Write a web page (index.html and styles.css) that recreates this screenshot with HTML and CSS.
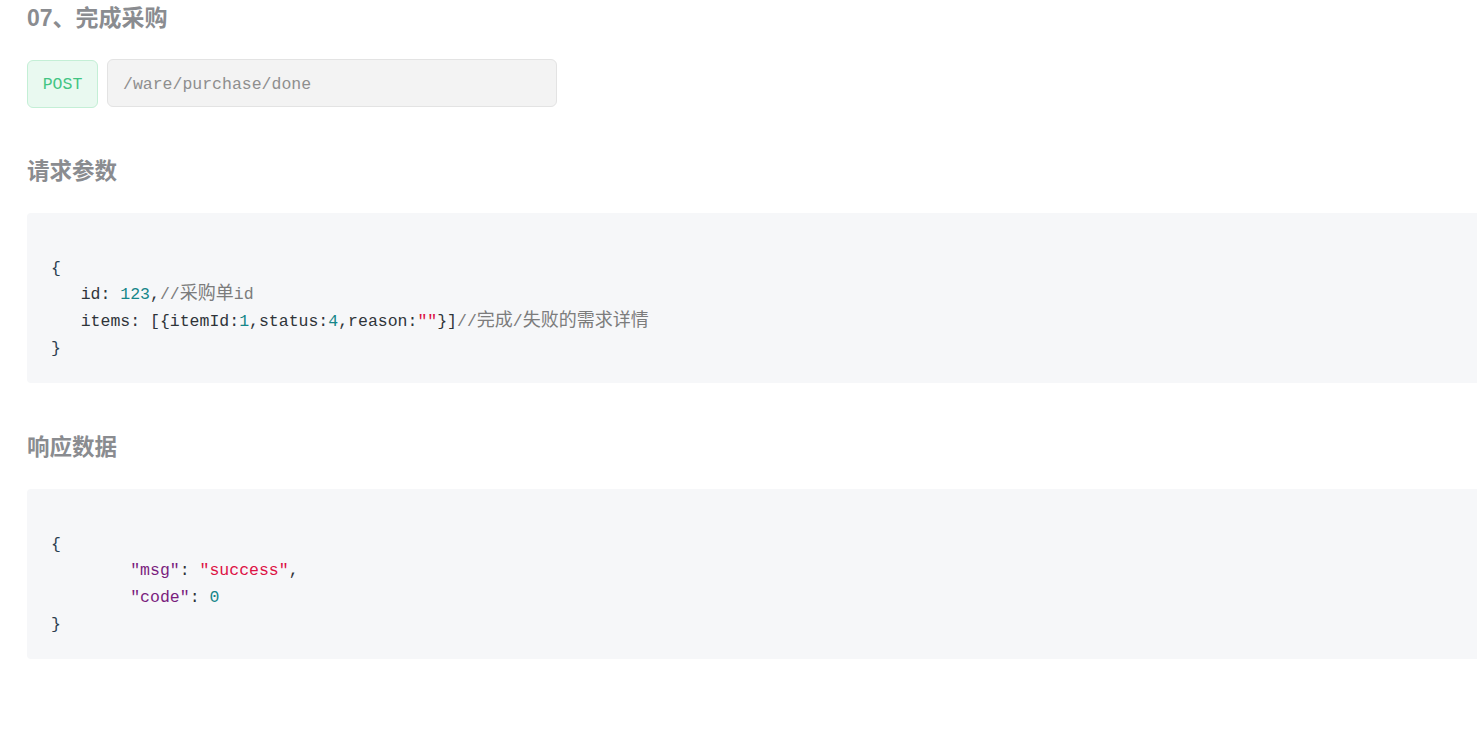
FILE: index.html
```
<!DOCTYPE html>
<html lang="zh-CN">
<head>
  <meta charset="UTF-8" />
  <title>07、完成采购</title>
  <link rel="stylesheet" href="styles.css">
</head>
<body>

<h1 class="api-title">07、完成采购</h1>

<div class="api-url">
  <span class="method">POST</span>
  <span class="path">/ware/purchase/done</span>
</div>

<h2 class="section">请求参数</h2>
<pre class="code">

<span class="p">{</span>
   id: <span class="num">123</span>,<span class="cmt">//<span class="cjk">采购单</span>id</span>
   items: [{itemId:<span class="num">1</span>,status:<span class="num">4</span>,reason:<span class="str">""</span>}]<span class="cmt">//<span class="cjk">完成</span>/<span class="cjk">失败的需求详情</span></span>
<span class="p">}</span></pre>

<h2 class="section">响应数据</h2>
<pre class="code">

<span class="p">{</span>
        <span class="key">"msg"</span>: <span class="str">"success"</span>,
        <span class="key">"code"</span>: <span class="num">0</span>
<span class="p">}</span></pre>

</body>
</html>
```

FILE: styles.css
```
body {
  margin: 0;
  padding: 0 0 0 27px;
  overflow-x: hidden;
  background: #fff;
  font-family: "Liberation Sans", "Noto Sans CJK SC", sans-serif;
  color: #333;
}
.api-title {
  margin: 0;
  height: 36px;
  line-height: 36px;
  font-size: 23px;
  font-weight: bold;
  color: #8a8c90;
}
.api-url {
  display: flex;
  align-items: flex-start;
  gap: 9px;
  margin-top: 23px;
  font-family: "Liberation Mono", monospace;
  font-size: 16.5px;
}
.method {
  box-sizing: border-box;
  width: 71px;
  height: 48px;
  margin-top: 1px;
  line-height: 48px;
  text-align: center;
  color: #42c583;
  background-color: #e9f9f0;
  border: 1px solid #c4efd6;
  border-radius: 6px;
}
.path {
  box-sizing: border-box;
  width: 450px;
  height: 48px;
  line-height: 50px;
  padding: 0 15px;
  color: #8e8e8e;
  background-color: #f3f3f3;
  border: 1px solid #e3e3e3;
  border-radius: 6px;
}
.section {
  margin: 46px 0 0;
  height: 36px;
  line-height: 36px;
  font-size: 22.5px;
  font-weight: bold;
  color: #8a8c90;
}
.code {
  margin: 23px -30px 0 0;
  padding: 16px 24px 20px;
  height: 134px;
  background-color: #f6f7f9;
  border-radius: 4px;
  font-family: "Liberation Mono", "Noto Sans CJK SC", monospace;
  font-size: 16.5px;
  line-height: 26.7px;
  color: #2f3439;
  overflow: hidden;
}
.code + .section {
  margin-top: 47px;
}
.cjk {
  font-family: "Noto Sans CJK SC", sans-serif;
  font-size: 18px;
  line-height: 16px;
}
.p { color: #2c3e50; }
.num { color: #16868a; }
.str { color: #dd1144; }
.key { color: #7a1d7e; }
.cmt { color: #7c7c7c; }
```
